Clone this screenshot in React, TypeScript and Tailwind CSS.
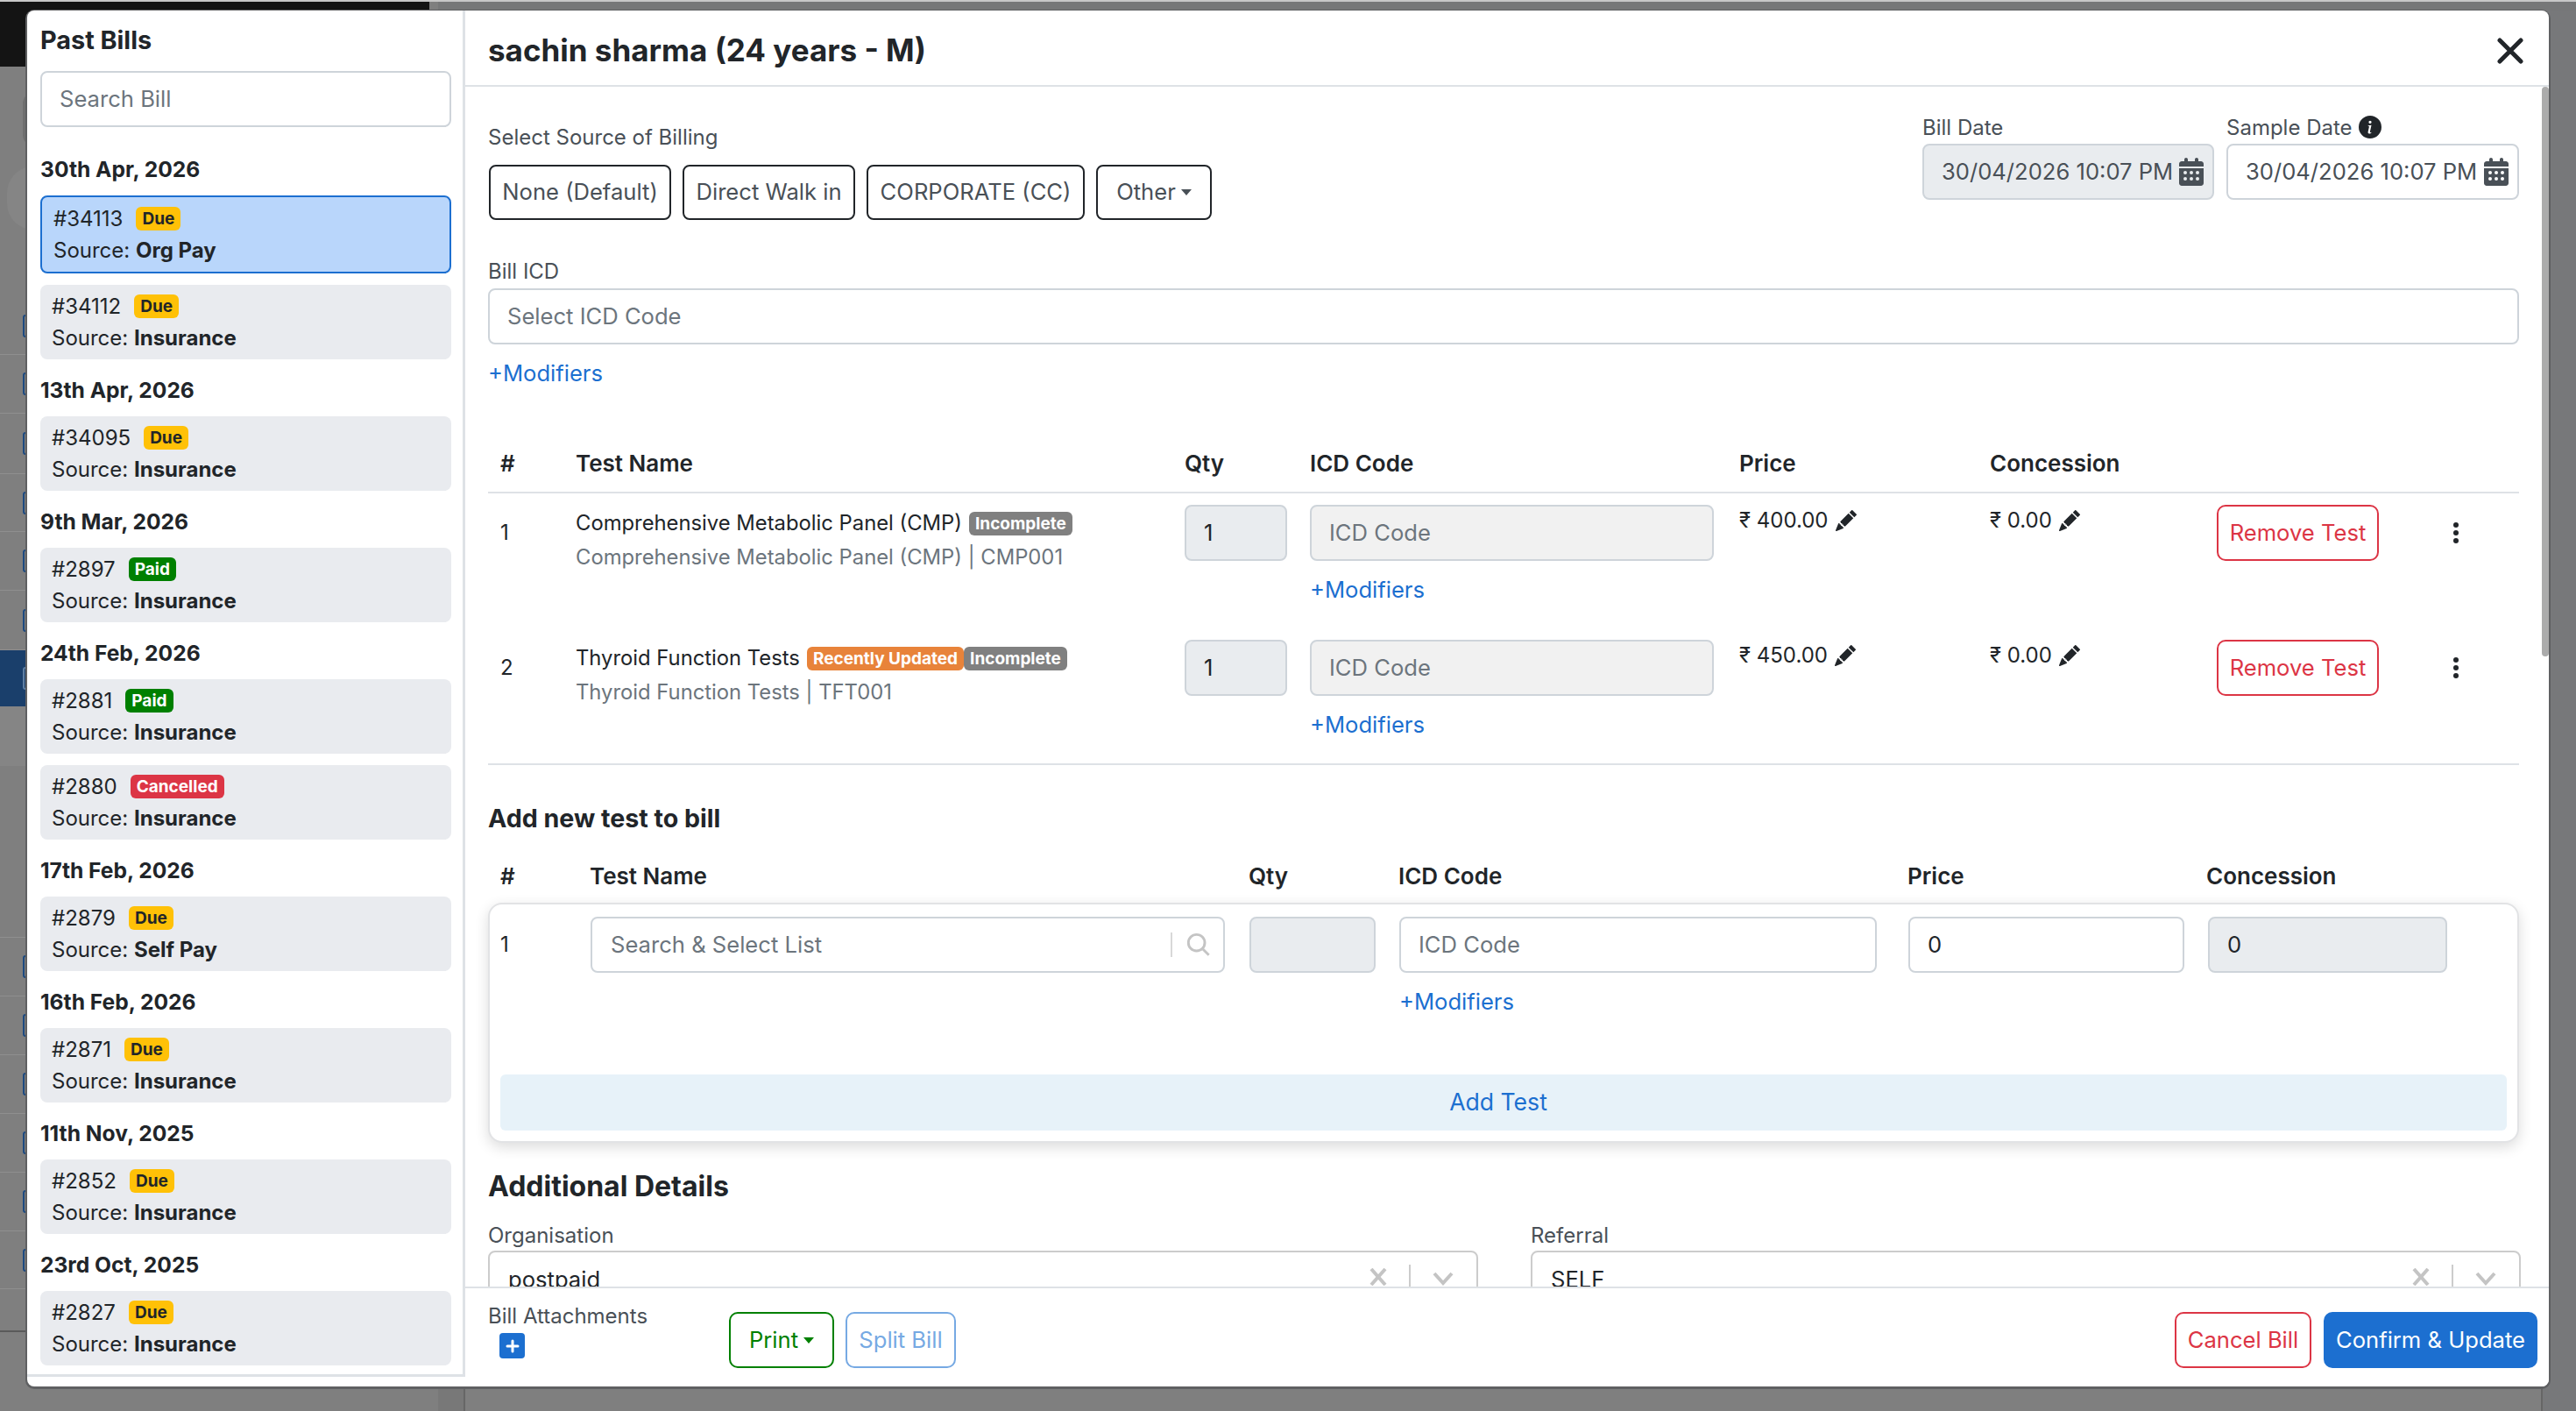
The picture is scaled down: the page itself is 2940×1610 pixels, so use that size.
import React from "react";

const F = "font-['Inter','Liberation_Sans',sans-serif]";

function Cal() {
  return (
    <svg viewBox="0 0 448 512" className="w-[28px] h-[32px] shrink-0" fill="#495057">
      <path d="M96 32V64H48C21.5 64 0 85.5 0 112v48H448V112c0-26.5-21.5-48-48-48H352V32c0-17.7-14.3-32-32-32s-32 14.3-32 32V64H160V32c0-17.7-14.3-32-32-32S96 14.3 96 32zM448 192H0V464c0 26.5 21.5 48 48 48H400c26.5 0 48-21.5 48-48V192zM80 272a32 32 0 1 1 64 0 32 32 0 1 1-64 0zm112 0a32 32 0 1 1 64 0 32 32 0 1 1-64 0zm144-32a32 32 0 1 1 0 64 32 32 0 1 1 0-64zM80 384a32 32 0 1 1 64 0 32 32 0 1 1-64 0zm144-32a32 32 0 1 1 0 64 32 32 0 1 1 0-64zm80 32a32 32 0 1 1 64 0 32 32 0 1 1-64 0z" />
    </svg>
  );
}

function Pencil() {
  return (
    <svg viewBox="0 0 16 16" className="w-[24px] h-[24px] shrink-0" fill="#212529">
      <path d="M12.854.146a.5.5 0 0 0-.707 0L10.5 1.793 14.207 5.5l1.647-1.646a.5.5 0 0 0 0-.708l-3-3zm.646 6.061L9.793 2.5 3.293 9H3.5a.5.5 0 0 1 .5.5v.5h.5a.5.5 0 0 1 .5.5v.5h.5a.5.5 0 0 1 .5.5v.5h.5a.5.5 0 0 1 .5.5v.207l6.5-6.5zm-7.468 7.468A.5.5 0 0 1 6 13.5V13h-.5a.5.5 0 0 1-.5-.5V12h-.5a.5.5 0 0 1-.5-.5V11h-.5a.5.5 0 0 1-.5-.5V10h-.5a.499.499 0 0 1-.175-.032l-.179.178a.5.5 0 0 0-.11.168l-2 5a.5.5 0 0 0 .65.65l5-2a.5.5 0 0 0 .168-.11l.178-.178z" />
    </svg>
  );
}

function Dots() {
  return (
    <svg viewBox="0 0 6 24" className="w-[6px] h-[24px]" fill="#212529">
      <circle cx="3" cy="3" r="3" />
      <circle cx="3" cy="12" r="3" />
      <circle cx="3" cy="21" r="3" />
    </svg>
  );
}

function Badge({ label, cls }: { label: string; cls: string }) {
  return (
    <span className={`inline-flex items-center justify-center h-[27px] px-[7px] rounded-[6px] text-[19px] font-bold leading-none ${cls}`}>
      {label}
    </span>
  );
}

type Bill = { id: string; status: "Due" | "Paid" | "Cancelled"; source: string; selected?: boolean };
type Group = { date: string; bills: Bill[] };

const groups: Group[] = [
  { date: "30th Apr, 2026", bills: [
    { id: "#34113", status: "Due", source: "Org Pay", selected: true },
    { id: "#34112", status: "Due", source: "Insurance" },
  ] },
  { date: "13th Apr, 2026", bills: [{ id: "#34095", status: "Due", source: "Insurance" }] },
  { date: "9th Mar, 2026", bills: [{ id: "#2897", status: "Paid", source: "Insurance" }] },
  { date: "24th Feb, 2026", bills: [
    { id: "#2881", status: "Paid", source: "Insurance" },
    { id: "#2880", status: "Cancelled", source: "Insurance" },
  ] },
  { date: "17th Feb, 2026", bills: [{ id: "#2879", status: "Due", source: "Self Pay" }] },
  { date: "16th Feb, 2026", bills: [{ id: "#2871", status: "Due", source: "Insurance" }] },
  { date: "11th Nov, 2025", bills: [{ id: "#2852", status: "Due", source: "Insurance" }] },
  { date: "23rd Oct, 2025", bills: [{ id: "#2827", status: "Due", source: "Insurance" }] },
];

const statusCls: Record<Bill["status"], string> = {
  Due: "bg-[#ffc107] text-[#212529]",
  Paid: "bg-[#008000] text-white",
  Cancelled: "bg-[#dc3545] text-white",
};

function BillCard({ b }: { b: Bill }) {
  return (
    <div
      className={
        b.selected
          ? "h-[89px] rounded-[8px] border-2 border-[#1c6fd0] bg-[#b9d6fb] pl-[13px] flex flex-col justify-center gap-[9px] text-[24px] leading-[27px] text-[#212529]"
          : "h-[85px] rounded-[8px] bg-[#e9ebef] pl-[13px] flex flex-col justify-center gap-[9px] text-[24px] leading-[27px] text-[#212529]"
      }
    >
      <div className="flex items-center gap-[15px]">
        <span>{b.id}</span>
        <Badge label={b.status} cls={statusCls[b.status]} />
      </div>
      <div>
        Source: <span className="font-bold">{b.source}</span>
      </div>
    </div>
  );
}

const inputBase = "h-[64px] rounded-[8px] border-2 border-[#ced4da] flex items-center text-[25.6px]";

const gridTests = "grid grid-cols-[100px_695px_143px_490px_286px_259px_273px_1fr]";
const gridNew = "grid grid-cols-[116px_752px_171px_581px_341px_1fr]";

function TestRow({ n, name, sub, price, badges }: { n: string; name: string; sub: string; price: string; badges: React.ReactNode }) {
  return (
    <div className={`${gridTests} h-[154px] pt-[13px] text-[24px] text-[#212529]`}>
      <div className="pl-[14px] pt-[18px] leading-[28px]">{n}</div>
      <div className="text-[23.8px]">
        <div className="flex items-center h-[42px]">
          <span className="mr-[8px] whitespace-nowrap">{name}</span>
          {badges}
        </div>
        <div className="text-[#6c757d] leading-[36px]">{sub}</div>
      </div>
      <div>
        <div className={`${inputBase} w-[117px] bg-[#e9ecef] pl-[20px] text-[#212529]`}>1</div>
      </div>
      <div>
        <div className={`${inputBase} w-[461px] bg-[#f1f1f1] pl-[20px] text-[#6c757d]`}>ICD Code</div>
        <div className="mt-[17px] text-[#1c6fd0] text-[25.6px] leading-[32px]">+Modifiers</div>
      </div>
      <div className="flex items-center gap-[8px] h-[36px]">
        <span className="text-[24px]">₹ {price}</span>
        <Pencil />
      </div>
      <div className="flex items-center gap-[8px] h-[36px]">
        <span className="text-[24px]">₹ 0.00</span>
        <Pencil />
      </div>
      <div>
        <button className="w-[185px] h-[64px] rounded-[10px] border-2 border-[#dc3545] text-[#dc3545] bg-white text-[25.6px]">Remove Test</button>
      </div>
      <div className="flex justify-start -ml-[3px] pt-[20px]">
        <Dots />
      </div>
    </div>
  );
}

function ClearChevron() {
  return (
    <div className="flex items-start gap-[25px] pt-[18px] pr-[26px]">
      <svg viewBox="0 0 20 20" className="w-[20px] h-[20px]" stroke="#c4c4c4" strokeWidth="4" fill="none"><path d="M2 1 18 19M18 1 2 19" /></svg>
      <div className="w-[2px] h-[34px] bg-[#cccccc] -mt-[4px]" />
      <svg viewBox="0 0 24 16" className="w-[24px] h-[16px] mt-[4px]" stroke="#c4c4c4" strokeWidth="4" fill="none"><path d="M2 2 12 13 22 2" /></svg>
    </div>
  );
}

function BackRow({ h }: { h: string }) {
  return (
    <div className={`${h} border-b border-[#8f8f8f] flex items-center pl-[26px]`}>
      <div className="w-[10px] h-[26px] rounded-[3px] border-2 border-[#1d4a80]" />
    </div>
  );
}

const sources: [string, string][] = [
  ["None (Default)", "w-[208px]"],
  ["Direct Walk in", "w-[197px]"],
  ["CORPORATE (CC)", "w-[249px]"],
];

export default function App() {
  return (
    <div className={`relative w-[2940px] h-[1610px] overflow-hidden bg-[#7f7f7f] ${F}`}>
      <div className="h-[2px] bg-[#c8c8c8]" />
      <div className="flex h-[1608px]">
        {/* dimmed page behind the dialog */}
        <div className="w-[500px] shrink-0 flex flex-col">
          <div className="w-[490px] h-[74px] bg-[#141414] shrink-0" />
          <div className="h-[263px] shrink-0 pt-[30px] pl-[8px]">
            <div className="ml-[18px] w-[24px] h-[60px] rounded-full bg-[#6f6f6f]" />
            <div className="mt-[24px] w-[60px] h-[72px] rounded-full bg-[#858585]" />
          </div>
          <BackRow h="h-[66px]" />
          <BackRow h="h-[67px]" />
          <BackRow h="h-[69px]" />
          <BackRow h="h-[66px]" />
          <BackRow h="h-[67px]" />
          <BackRow h="h-[68px]" />
          <div className="h-[64px] shrink-0 bg-[#1a3f6b] flex items-center pl-[26px]">
            <div className="w-[10px] h-[26px] rounded-[3px] border-2 border-[#5f7fa3]" />
          </div>
          <div className="h-[68px] shrink-0 bg-[#858585]" />
          <div className="h-[196px] shrink-0 border-b border-[#8f8f8f]" />
          <BackRow h="h-[67px]" />
          <BackRow h="h-[67px]" />
          <BackRow h="h-[67px]" />
          <BackRow h="h-[67px]" />
          <BackRow h="h-[67px]" />
          <BackRow h="h-[66px]" />
          <div className="h-[49px] shrink-0 border-b-2 border-[#5a5a5a]" />
        </div>
        <div className="w-[31px] shrink-0 bg-[#787878] border-r-2 border-[#666666]" />
        <div className="flex-1 bg-[#7f7f7f]" />
        <div className="w-[40px] shrink-0 bg-[#77787a] border-l-2 border-[#666666]" />
      </div>
      <div className="absolute left-[500px] top-[2px] right-0 h-[10px] bg-[#767778]" />

      <div className="absolute left-[31px] top-[12px] w-[2878px] h-[1570px] bg-white rounded-[8px] flex overflow-hidden shadow-[0_1px_0_2px_#5f6062]">
        {/* past bills */}
        <aside className="w-[500px] h-[1559px] shrink-0 border-r-[3px] border-b-[3px] border-[#dee2e6] pl-[15px] pr-[13px] pt-[18px] overflow-hidden">
          <div className="text-[28.8px] font-bold leading-[32px] text-[#212529]">Past Bills</div>
          <div className="mt-[19px] h-[64px] rounded-[8px] border-2 border-[#ced4da] flex items-center pl-[20px] text-[25.6px] text-[#6c757d]">Search Bill</div>
          <div className="mt-[32px] flex flex-col">
            {groups.map((g, i) => (
              <div key={g.date} className={i === 0 ? "" : "mt-[19px]"}>
                <div className="text-[24.6px] font-bold leading-[32px] text-[#212529] mb-[14px]">{g.date}</div>
                <div className="flex flex-col gap-[13px]">
                  {g.bills.map((b) => (
                    <BillCard key={b.id} b={b} />
                  ))}
                </div>
              </div>
            ))}
          </div>
        </aside>

        {/* main */}
        <main className="relative flex-1 flex flex-col min-w-0">
          <header className="h-[87px] shrink-0 border-b-2 border-[#dee2e6] flex items-center justify-between pt-[6px] pl-[26px] pr-[29px]">
            <h1 className="text-[35px] font-bold text-[#212529] leading-none">sachin sharma (24 years - M)</h1>
            <svg viewBox="0 0 30 30" className="w-[30px] h-[30px]" stroke="#212529" strokeWidth="5" strokeLinecap="round" fill="none"><path d="M3 3 27 27M27 3 3 27" /></svg>
          </header>

          <div className="relative flex-1 overflow-hidden pl-[26px] pr-[34px] text-[24px] text-[#212529]">
            <div className="absolute right-0 top-0 w-[8px] h-[650px] rounded-[4px] bg-[#ababab]" />

            <div className="flex justify-between h-[197px]">
              <div className="pt-[44px]">
                <div className="leading-[28px] text-[#495057]">Select Source of Billing</div>
                <div className="mt-[17px] ml-[1px] flex gap-[13px]">
                  {sources.map(([t, w]) => (
                    <button key={t} className={`h-[63px] ${w} rounded-[8px] border-2 border-[#212529] bg-white text-[25.6px] text-[#495057] whitespace-nowrap`}>{t}</button>
                  ))}
                  <button className="h-[63px] w-[132px] justify-center rounded-[8px] border-2 border-[#212529] bg-white text-[25.6px] text-[#495057] flex items-center gap-[6px]">
                    Other
                    <span className="w-0 h-0 border-x-[6px] border-x-transparent border-t-[7px] border-t-[#495057]" />
                  </button>
                </div>
              </div>
              <div className="flex gap-[14px] pt-[33px]">
                <div className="w-[333px]">
                  <div className="leading-[28px] text-[#495057]">Bill Date</div>
                  <div className={`${inputBase} mt-[4px] bg-[#e9ecef] pl-[20px] pr-[10px] justify-between text-[#495057]`}>
                    <span>30/04/2026 10:07 PM</span>
                    <Cal />
                  </div>
                </div>
                <div className="w-[334px]">
                  <div className="leading-[28px] text-[#495057] flex items-center gap-[7px]">
                    Sample Date
                    <svg viewBox="0 0 16 16" className="w-[26px] h-[26px] -mt-[2px]" fill="#212529">
                      <path d="M8 16A8 8 0 1 0 8 0a8 8 0 0 0 0 16zm.93-9.41-1 4.7c-.07.34.03.53.3.53.2 0 .49-.07.69-.25l-.09.42c-.29.35-.92.6-1.46.6-.7 0-1-.42-.8-1.3l.73-3.4c.06-.3 0-.4-.3-.47l-.45-.08.08-.38 2.3-.37zM8 5.5a1 1 0 1 1 0-2 1 1 0 0 1 0 2z" />
                    </svg>
                  </div>
                  <div className={`${inputBase} mt-[4px] bg-white pl-[20px] pr-[10px] justify-between text-[#495057]`}>
                    <span>30/04/2026 10:07 PM</span>
                    <Cal />
                  </div>
                </div>
              </div>
            </div>

            <div className="leading-[28px] text-[#495057]">Bill ICD</div>
            <div className={`${inputBase} mt-[5px] pl-[20px] text-[#6c757d]`}>Select ICD Code</div>
            <div className="mt-[17px] text-[#1c6fd0] text-[25.6px] leading-[32px]">+Modifiers</div>

            <div className={`${gridTests} mt-[71px] h-[50px] border-b-2 border-[#dee2e6] text-[26px] font-semibold leading-[32px]`}>
              <div className="pl-[14px]">#</div>
              <div>Test Name</div>
              <div>Qty</div>
              <div>ICD Code</div>
              <div>Price</div>
              <div>Concession</div>
              <div />
              <div />
            </div>

            <TestRow
              n="1"
              name="Comprehensive Metabolic Panel (CMP)"
              sub="Comprehensive Metabolic Panel (CMP) | CMP001"
              price="400.00"
              badges={<Badge label="Incomplete" cls="bg-[#808080] text-white" />}
            />
            <TestRow
              n="2"
              name="Thyroid Function Tests"
              sub="Thyroid Function Tests | TFT001"
              price="450.00"
              badges={
                <>
                  <Badge label="Recently Updated" cls="bg-[#e8833a] text-white" />
                  <Badge label="Incomplete" cls="bg-[#808080] text-white" />
                </>
              }
            />
            <div className="h-[2px] bg-[#dee2e6]" />

            <div className="mt-[44px] text-[28.6px] font-bold leading-[34px]">Add new test to bill</div>
            <div className={`${gridNew} mt-[33px] text-[26px] font-semibold leading-[32px]`}>
              <div className="pl-[14px]">#</div>
              <div>Test Name</div>
              <div>Qty</div>
              <div>ICD Code</div>
              <div>Price</div>
              <div>Concession</div>
            </div>

            <div className="mt-[14px] h-[274px] rounded-[16px] border-2 border-[#e2e3e5] bg-white shadow-[0_5px_16px_rgba(0,0,0,0.14)] px-[12px] pt-[14px]">
              <div className="grid grid-cols-[103px_752px_171px_581px_342px_273px] h-[180px]">
                <div className="h-[64px] flex items-center text-[24px]">1</div>
                <div>
                  <div className={`${inputBase} w-[724px] bg-white pl-[21px] pr-[14px] justify-between text-[#6c757d]`}>
                    <span>Search &amp; Select List</span>
                    <div className="flex items-center gap-[16px]">
                      <div className="w-[2px] h-[28px] bg-[#d8d8d8]" />
                      <svg viewBox="0 0 24 24" className="w-[28px] h-[28px]" stroke="#c4c4c4" strokeWidth="2.5" fill="none"><circle cx="10" cy="10" r="8" /><path d="M16 16 22 22" /></svg>
                    </div>
                  </div>
                </div>
                <div>
                  <div className={`${inputBase} w-[144px] bg-[#e9ecef]`} />
                </div>
                <div>
                  <div className={`${inputBase} w-[545px] bg-white pl-[20px] text-[#6c757d]`}>ICD Code</div>
                  <div className="mt-[17px] text-[#1c6fd0] text-[25.6px] leading-[32px]">+Modifiers</div>
                </div>
                <div>
                  <div className={`${inputBase} w-[315px] bg-white pl-[20px]`}>0</div>
                </div>
                <div>
                  <div className={`${inputBase} w-[273px] bg-[#e9ecef] pl-[20px]`}>0</div>
                </div>
              </div>
              <button className="w-full h-[64px] rounded-[6px] bg-[#e7f2f9] text-[#1c6fd0] text-[26.6px] pr-[12px]">Add Test</button>
            </div>

            <div className="mt-[31px] text-[32px] font-bold leading-[38px]">Additional Details</div>
            <div className="mt-[23px] grid grid-cols-[1130px_1130px] gap-x-[60px]">
              <div>
                <div className="leading-[28px] text-[#495057]">Organisation</div>
                <div className="mt-[3px] h-[64px] rounded-[8px] border-2 border-[#cccccc] flex justify-between">
                  <span className="pl-[21px] pt-[13px] text-[25.6px] leading-[36px]">postpaid</span>
                  <ClearChevron />
                </div>
              </div>
              <div>
                <div className="leading-[28px] text-[#495057]">Referral</div>
                <div className="mt-[3px] h-[64px] rounded-[8px] border-2 border-[#cccccc] flex justify-between">
                  <span className="pl-[21px] pt-[13px] text-[25.6px] leading-[36px]">SELF</span>
                  <ClearChevron />
                </div>
              </div>
            </div>
          </div>

          <footer className="relative h-[114px] shrink-0 bg-white border-t-2 border-[#dee2e6] pl-[26px] pr-[13px] flex items-start">
            <div className="w-[275px] pt-[18px]">
              <div className="leading-[28px] text-[24px] text-[#495057]">Bill Attachments</div>
              <div className="ml-[13px] mt-[5px] w-[29px] h-[29px] rounded-[4px] bg-[#1c6fd0] flex items-center justify-center">
                <svg viewBox="0 0 16 16" className="w-[16px] h-[16px]" stroke="#fff" strokeWidth="3" strokeLinecap="round"><path d="M8 2v12M2 8h12" /></svg>
              </div>
            </div>
            <div className="flex gap-[13px] pt-[27px]">
              <button className="h-[64px] w-[120px] rounded-[10px] border-2 border-[#008000] text-[#008000] text-[25.6px] flex items-center justify-center gap-[6px]">
                Print
                <span className="w-0 h-0 border-x-[6px] border-x-transparent border-t-[7px] border-t-[#008000]" />
              </button>
              <button className="h-[64px] w-[126px] rounded-[10px] border-2 border-[#76a9e3] text-[#76a9e3] text-[25.6px]">Split Bill</button>
            </div>
            <div className="ml-auto flex gap-[14px] pt-[27px]">
              <button className="h-[64px] w-[156px] rounded-[10px] border-2 border-[#dc3545] text-[#dc3545] text-[25.6px]">Cancel Bill</button>
              <button className="h-[64px] w-[244px] rounded-[10px] bg-[#1c6fd0] text-white text-[25.6px]">Confirm &amp; Update</button>
            </div>
          </footer>
        </main>
      </div>
    </div>
  );
}
